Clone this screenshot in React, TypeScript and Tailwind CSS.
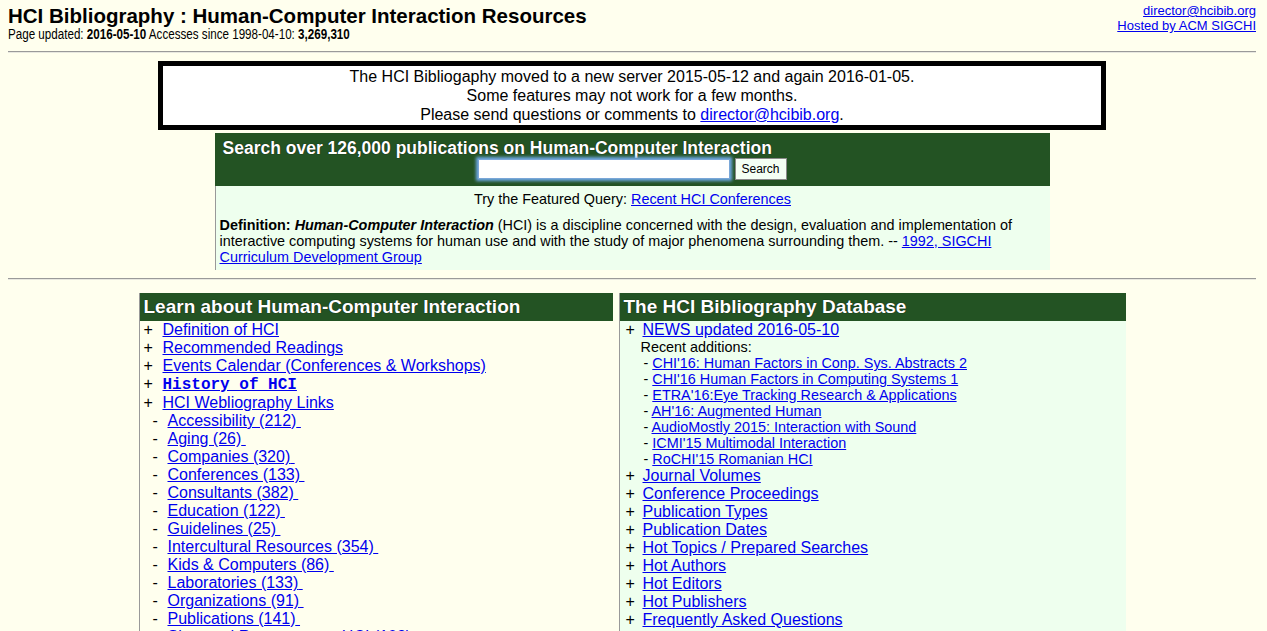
import React from "react";

const learnTop = [
  "Definition of HCI",
  "Recommended Readings",
  "Events Calendar (Conferences & Workshops)",
];
const webLinks = [
  "Accessibility (212)",
  "Aging (26)",
  "Companies (320)",
  "Conferences (133)",
  "Consultants (382)",
  "Education (122)",
  "Guidelines (25)",
  "Intercultural Resources (354)",
  "Kids & Computers (86)",
  "Laboratories (133)",
  "Organizations (91)",
  "Publications (141)",
  "Sites and Resources on HCI (102)",
  "Software (217)",
  "Usability (428)",
];
const recent = [
  "CHI'16: Human Factors in Conp. Sys. Abstracts 2",
  "CHI'16 Human Factors in Computing Systems 1",
  "ETRA'16:Eye Tracking Research & Applications",
  "AH'16: Augmented Human",
  "AudioMostly 2015: Interaction with Sound",
  "ICMI'15 Multimodal Interaction",
  "RoCHI'15 Romanian HCI",
];
const dbLinks = [
  "Journal Volumes",
  "Conference Proceedings",
  "Publication Types",
  "Publication Dates",
  "Hot Topics / Prepared Searches",
  "Hot Authors",
  "Hot Editors",
  "Hot Publishers",
  "Frequently Asked Questions",
  "Advanced Search",
  "About the Bibliography",
];

const A = ({ children, className = "" }: { children: React.ReactNode; className?: string }) => (
  <a href="#" className={"text-[#0000ee] underline " + className}>
    {children}
  </a>
);

const Hr = () => <div className="h-[2px] border-t border-[#9a9a9a] border-b border-b-[#e8e8e0]" />;

export default function App() {
  return (
    <div
      className="min-h-screen bg-[#ffffee] pl-2 pr-[11px] pt-[3px] text-black"
      style={{ fontFamily: '"Liberation Sans", Arial, sans-serif' }}
    >
      {/* Header */}
      <div className="flex h-[40px] justify-between">
        <div className="pt-[2px]">
          <h1 className="text-[20.5px] font-bold leading-[21px]">
            HCI Bibliography : Human-Computer Interaction Resources
          </h1>
          <div className="h-[15px] pt-[1px] text-[14px] leading-[15px]">
            <span className="inline-block origin-left scale-x-[0.83] whitespace-nowrap">
              Page updated: <b>2016-05-10</b> Accesses since 1998-04-10: <b>3,269,310</b>
            </span>
          </div>
        </div>
        <div className="text-right text-[13px] leading-[15px]">
          <div>
            <A>director@hcibib.org</A>
          </div>
          <div>
            <A>Hosted by ACM SIGCHI</A>
          </div>
        </div>
      </div>

      <div className="mt-[8px]">
        <Hr />
      </div>

      {/* Notice */}
      <div className="mx-auto mt-[8px] w-[948px] border-[5px] border-black bg-white py-[1px] text-center text-[16px] leading-[19px]">
        <div>The HCI Bibliogaphy moved to a new server 2015-05-12 and again 2016-01-05.</div>
        <div>Some features may not work for a few months.</div>
        <div>
          Please send questions or comments to <A>director@hcibib.org</A>.
        </div>
      </div>

      {/* Search panel */}
      <div className="mx-auto mt-[3px] w-[835px]">
        <div className="h-[53px] bg-[#235323] pt-[5px]">
          <div className="pl-[8px] text-[17.5px] font-bold leading-[20px] text-white [text-shadow:0_0_1px_#000]">
            Search over 126,000 publications on Human-Computer Interaction
          </div>
          <div className="flex items-center justify-center gap-[5px]">
            <input
              type="text"
              className="h-[20px] w-[252px] border border-[#7aa7d8] bg-white shadow-[0_0_3px_2px_#6fa8e6] outline-none"
            />
            <button className="h-[22px] w-[52px] border border-[#8a8a8a] bg-[#f4fff4] text-[12px] leading-[20px] text-black">
              Search
            </button>
          </div>
        </div>
        <div className="border-l border-[#999] bg-[#eeffee] px-[4px] pt-[5px] pb-[5px] text-[14.4px] leading-[16px]">
          <div className="text-center">
            Try the Featured Query: <A>Recent HCI Conferences</A>
          </div>
          <p className="mt-[10px]">
            <b>Definition:</b> <b className="italic">Human-Computer Interaction</b> (HCI) is a discipline
            concerned with the design, evaluation and implementation of interactive computing systems for
            human use and with the study of major phenomena surrounding them. --{" "}
            <A>1992, SIGCHI Curriculum Development Group</A>
          </p>
        </div>
      </div>

      <div className="mt-[8px]">
        <Hr />
      </div>

      {/* Columns */}
      <div className="mx-auto mt-[13px] flex w-[987px] items-stretch gap-[6px]">
        {/* Left column */}
        <div className="w-[474px] border-l border-[#999] pb-4">
          <div className="h-[28px] bg-[#235323] pl-[4px] text-[19px] font-bold leading-[27px] text-white [text-shadow:0_0_1px_#000]">
            Learn about Human-Computer Interaction
          </div>
          <ul className="text-[16px] leading-[18px]">
            {learnTop.map((t) => (
              <li key={t} className="flex pl-[4px]">
                <span className="w-[19px]">+</span>
                <A>{t}</A>
              </li>
            ))}
            <li className="flex h-[19px] items-start pl-[4px]">
              <span className="w-[19px]">+</span>
              <A className="font-bold">
                <span style={{ fontFamily: '"Liberation Mono", "Courier New", monospace' }}>History of HCI</span>
              </A>
            </li>
            <li className="flex pl-[4px]">
              <span className="w-[19px]">+</span>
              <A>HCI Webliography Links</A>
            </li>
            {webLinks.map((t) => (
              <li key={t} className="flex pl-[13px]">
                <span className="w-[15px]">-</span>
                <A>{t}{"\u00a0"}</A>
              </li>
            ))}
          </ul>
        </div>

        {/* Right column */}
        <div className="w-[507px] border-l border-[#999] bg-[#eeffee] pb-4">
          <div className="h-[28px] bg-[#235323] pl-[4px] text-[19px] font-bold leading-[27px] text-white [text-shadow:0_0_1px_#000]">
            The HCI Bibliography Database
          </div>
          <div className="flex pl-[6px] text-[16px] leading-[18px]">
            <span className="w-[17px]">+</span>
            <A>NEWS updated 2016-05-10</A>
          </div>
          <div className="pl-[21px] text-[14.4px] leading-[16px]">
            <div>Recent additions:</div>
            {recent.map((t) => (
              <div key={t} className="pl-[3px]">
                - <A>{t}</A>
              </div>
            ))}
          </div>
          <ul className="text-[16px] leading-[18px]">
            {dbLinks.map((t) => (
              <li key={t} className="flex pl-[6px]">
                <span className="w-[17px]">+</span>
                <A>{t}</A>
              </li>
            ))}
          </ul>
        </div>
      </div>
    </div>
  );
}
